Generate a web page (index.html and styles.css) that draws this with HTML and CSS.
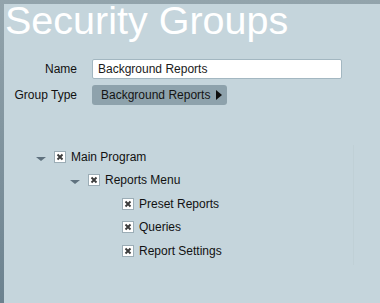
FILE: index.html
```html
<!DOCTYPE html>
<html lang="en">
<head>
    <meta charset="UTF-8">
    <title>Security Groups</title>
    <link rel="stylesheet" href="styles.css">
</head>
<body>
    <div class="page">
        <div class="content">
            <h1 class="title">Security Groups</h1>

            <div class="form-row name-row">
                <label class="label" for="group-name">Name</label>
                <input id="group-name" class="text-input" type="text" value="Background Reports">
            </div>
            <div class="form-row type-row">
                <span class="label">Group Type</span>
                <button class="dropdown">Background Reports
                    <svg class="dropdown-arrow" width="6" height="10" viewBox="0 0 6 10"><polygon points="0,0 6,5 0,10" fill="#0d0d0d"/></svg>
                </button>
            </div>

            <div class="tree">
                <div class="tree-row level-1">
                    <span class="toggle"><svg width="10" height="4" viewBox="0 0 10 4"><polygon points="0,0 10,0 5,4" fill="#5f717e"/></svg></span>
                    <span class="check"><svg width="12" height="12" viewBox="0 0 12 12"><rect x="0.5" y="0.5" width="11" height="11" fill="#fff" stroke="#9cadb6"/><path d="M3.5 3.5 L8.5 8.5 M8.5 3.5 L3.5 8.5" stroke="#3b3b3b" stroke-width="1.9"/></svg></span>
                    <span class="tree-text">Main Program</span>
                </div>
                <div class="tree-row level-2">
                    <span class="toggle"><svg width="10" height="4" viewBox="0 0 10 4"><polygon points="0,0 10,0 5,4" fill="#5f717e"/></svg></span>
                    <span class="check"><svg width="12" height="12" viewBox="0 0 12 12"><rect x="0.5" y="0.5" width="11" height="11" fill="#fff" stroke="#9cadb6"/><path d="M3.5 3.5 L8.5 8.5 M8.5 3.5 L3.5 8.5" stroke="#3b3b3b" stroke-width="1.9"/></svg></span>
                    <span class="tree-text">Reports Menu</span>
                </div>
                <div class="tree-row level-3">
                    <span class="toggle"></span>
                    <span class="check"><svg width="12" height="12" viewBox="0 0 12 12"><rect x="0.5" y="0.5" width="11" height="11" fill="#fff" stroke="#9cadb6"/><path d="M3.5 3.5 L8.5 8.5 M8.5 3.5 L3.5 8.5" stroke="#3b3b3b" stroke-width="1.9"/></svg></span>
                    <span class="tree-text">Preset Reports</span>
                </div>
                <div class="tree-row level-3">
                    <span class="toggle"></span>
                    <span class="check"><svg width="12" height="12" viewBox="0 0 12 12"><rect x="0.5" y="0.5" width="11" height="11" fill="#fff" stroke="#9cadb6"/><path d="M3.5 3.5 L8.5 8.5 M8.5 3.5 L3.5 8.5" stroke="#3b3b3b" stroke-width="1.9"/></svg></span>
                    <span class="tree-text">Queries</span>
                </div>
                <div class="tree-row level-3">
                    <span class="toggle"></span>
                    <span class="check"><svg width="12" height="12" viewBox="0 0 12 12"><rect x="0.5" y="0.5" width="11" height="11" fill="#fff" stroke="#9cadb6"/><path d="M3.5 3.5 L8.5 8.5 M8.5 3.5 L3.5 8.5" stroke="#3b3b3b" stroke-width="1.9"/></svg></span>
                    <span class="tree-text">Report Settings</span>
                </div>
            </div>
        </div>
    </div>
</body>
</html>
```

FILE: styles.css
```css
html, body {
    margin: 0;
    padding: 0;
}
body {
    font-family: "Liberation Sans", Arial, sans-serif;
    font-size: 12px;
    color: #111;
}
.page {
    height: 303px;
    box-sizing: border-box;
    padding: 4px 0 0 4px;
    background: linear-gradient(#93a4ac, #6c828f);
}
.content {
    height: 100%;
    background: #c5d5dc;
}
.title {
    margin: 0;
    padding-left: 1px;
    font-size: 39.5px;
    font-weight: normal;
    line-height: 32px;
    color: #fff;
}
.form-row {
    display: flex;
    align-items: center;
    gap: 15px;
}
.name-row { margin-top: 23px; }
.type-row { margin-top: 6px; }
.label {
    width: 73px;
    text-align: right;
}
.text-input {
    width: 250px;
    height: 20px;
    box-sizing: border-box;
    padding: 0 5px;
    border: 1px solid #a3b7c1;
    border-radius: 2px;
    background: #fff;
    font-family: inherit;
    font-size: 12px;
    color: #1a1a1a;
}
.dropdown {
    display: flex;
    align-items: center;
    gap: 6px;
    width: 135px;
    height: 20px;
    padding: 0 0 0 9px;
    border: none;
    border-radius: 3px;
    background: #8ea2ac;
    font-family: inherit;
    font-size: 12px;
    color: #141414;
}
.tree {
    margin-top: 40px;
    width: 350px;
    box-sizing: border-box;
    padding-bottom: 2px;
    border-right: 1px solid #c0d0d6;
}
.tree-row {
    display: flex;
    align-items: center;
    height: 23.5px;
}
.level-1 { padding-left: 30px; }
.level-2 { padding-left: 64px; }
.level-3 { padding-left: 98px; }
.toggle {
    width: 20px;
    display: flex;
    padding-top: 4px;
}
.toggle svg { margin-left: 2px; }
.check {
    display: flex;
    margin-right: 5px;
}
```
